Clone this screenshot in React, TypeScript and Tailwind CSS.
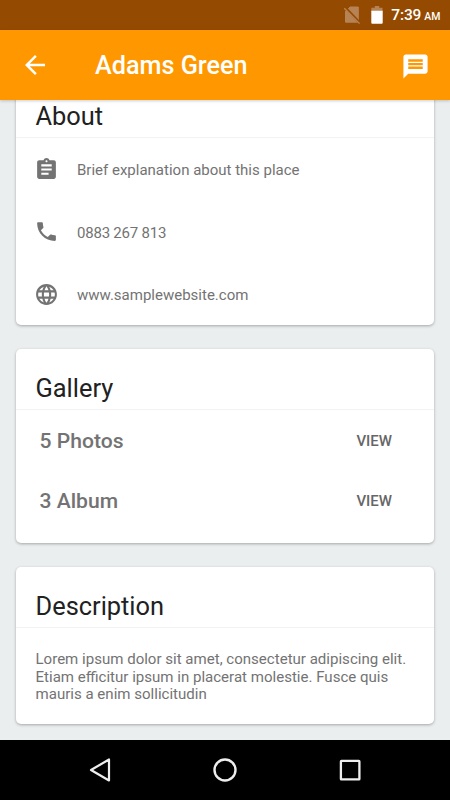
import type { ReactNode } from "react";
import { MdArrowBack, MdAssignment, MdLanguage, MdMessage, MdPhone } from "react-icons/md";

function StatusBar() {
  return (
    <div className="flex h-[30px] shrink-0 items-center justify-end bg-[#944a00] pr-[9.5px] text-white">
      <svg className="mr-[10px] h-[18px] w-[17px]" viewBox="0 0 17 18">
        <path
          d="M6 1h8.3v15.2H1.5V5.5z"
          fill="#b78354"
          stroke="#b78354"
          strokeLinejoin="round"
        />
        <path d="M0.5 2.5L14.8 17.5" stroke="#944a00" strokeWidth="2.6" transform="translate(0.8 -0.8)" />
        <path d="M0.3 2.3L15.6 17.6" stroke="#b78354" strokeWidth="1.3" />
      </svg>
      <svg className="mr-[8px] h-[18px] w-[12px]" viewBox="0 0 12 18">
        <path d="M3.8 0h4.4v1.8h3.3v4H0.3v-4h3.5z" fill="#b78354" />
        <path d="M0.3 4.8h11.4v12a.9.9 0 0 1-.9.9H1.2a.9.9 0 0 1-.9-.9z" fill="#fff" />
      </svg>
      <span className="flex items-baseline pt-[2px] font-medium">
        <span className="text-[15.5px] tracking-[-0.1px]">7:39</span>
        <span className="ml-[3px] text-[10.5px]">AM</span>
      </span>
    </div>
  );
}

function Card({ title, className, children }: { title: string; className: string; children: ReactNode }) {
  return (
    <section
      className={`flex shrink-0 flex-col rounded-[5px] bg-white shadow-[0_1px_3px_rgba(0,0,0,0.3)] ${className}`}
    >
      <h2 className="flex h-[61px] shrink-0 items-end border-b border-[#f2f2f2] pl-[19.5px] pb-[6px] text-[25.4px]/[30px] text-[#212121]">
        {title}
      </h2>
      {children}
    </section>
  );
}

function ContactRow({ icon, text, className = "" }: { icon: ReactNode; text: string; className?: string }) {
  return (
    <div className="flex h-[62.5px] items-center pl-[18px] text-[15px] text-[#737373]">
      <span className="pb-[2px]">{icon}</span>
      <span className={`ml-[18px] ${className}`}>{text}</span>
    </div>
  );
}

function GalleryRow({ label }: { label: string }) {
  return (
    <div className="flex h-[60px] items-center justify-between pr-[42px] pl-[23.5px] font-medium">
      <span className="text-[21.1px] text-[#737373]">{label}</span>
      <button className="text-[15px] text-[#666666]">VIEW</button>
    </div>
  );
}

export default function App() {
  return (
    <div className="flex h-[800px] w-[450px] flex-col overflow-hidden bg-[#eaeeef] font-['Roboto',sans-serif]">
      <StatusBar />
      <header className="z-10 flex h-[70px] shrink-0 items-center bg-[#ff9800] pr-5 pl-5 text-white shadow-[0_1px_3px_rgba(0,0,0,0.2)]">
        <MdArrowBack size={30} />
        <h1 className="ml-[45px] flex-1 pt-[2px] text-[25.2px] font-medium">Adams Green</h1>
        <MdMessage size={29} className="mt-[2px]" />
      </header>
      <main className="flex min-h-0 flex-1 flex-col gap-6 overflow-hidden px-4">
        <Card title="About" className="-mt-[23px] h-[248px]">
          <div className="pt-[1px]">
            <ContactRow icon={<MdAssignment size={25} />} text="Brief explanation about this place" />
            <ContactRow icon={<MdPhone size={25} />} text="0883 267 813" className="tracking-[-0.22px]" />
            <ContactRow icon={<MdLanguage size={25} />} text="www.samplewebsite.com" />
          </div>
        </Card>
        <Card title="Gallery" className="h-[194px]">
          <div className="pt-[1px]">
            <GalleryRow label="5 Photos" />
            <GalleryRow label="3 Album" />
          </div>
        </Card>
        <Card title="Description" className="h-[157px]">
          <p className="pt-[23px] pr-4 pl-[19.5px] text-[15.06px]/[17.5px] text-[#737373]">
            Lorem ipsum dolor sit amet, consectetur adipiscing elit. Etiam efficitur ipsum in placerat molestie. Fusce
            quis mauris a enim sollicitudin
          </p>
        </Card>
      </main>
      <nav className="flex h-[60px] shrink-0 items-center justify-center gap-[95px] bg-black">
        <svg className="size-[30px]" viewBox="0 0 30 30" fill="none" stroke="#eee" strokeWidth="2.2">
          <path d="M6 15L24 4.5v21z" strokeLinejoin="round" />
        </svg>
        <svg className="size-[30px]" viewBox="0 0 30 30" fill="none" stroke="#eee" strokeWidth="2.4">
          <circle cx="15" cy="15" r="10.5" />
        </svg>
        <svg className="size-[30px]" viewBox="0 0 30 30" fill="none" stroke="#eee" strokeWidth="2.3">
          <rect x="5.9" y="5.9" width="18.5" height="18.5" rx="0.5" />
        </svg>
      </nav>
    </div>
  );
}
